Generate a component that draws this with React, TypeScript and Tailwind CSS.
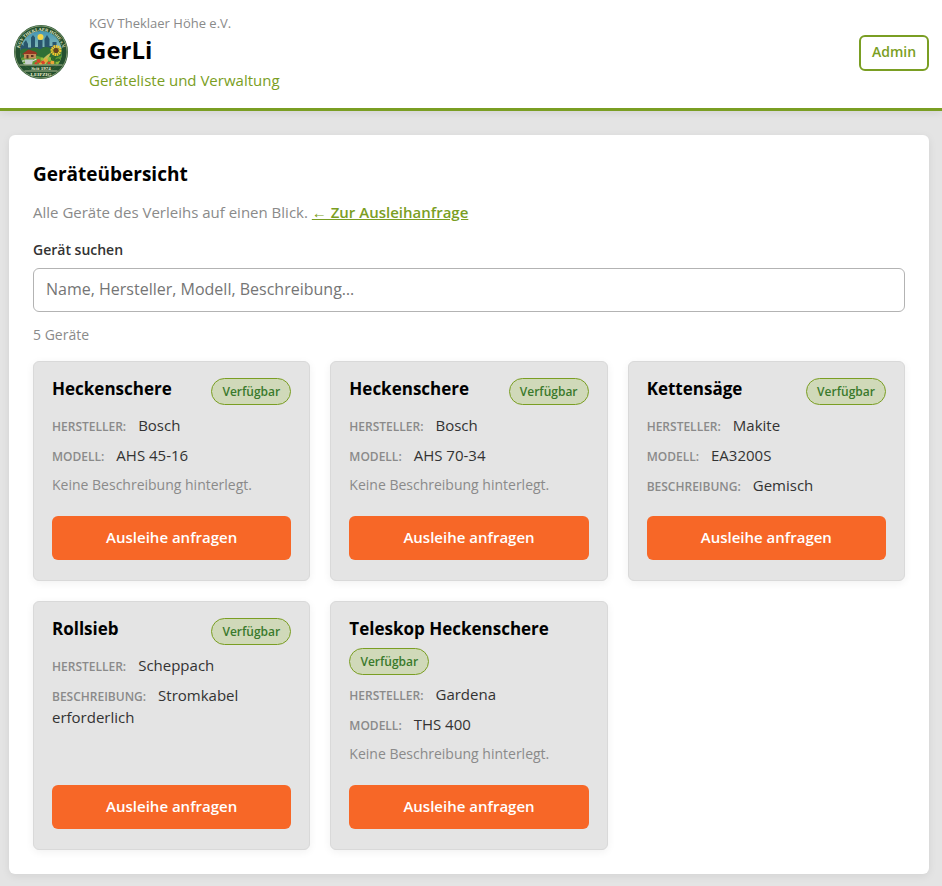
import { useState } from "react";

type Device = {
  id: number;
  name: string;
  manufacturer: string;
  model?: string;
  description?: string;
};

const devices: Device[] = [
  { id: 1, name: "Heckenschere", manufacturer: "Bosch", model: "AHS 45-16" },
  { id: 2, name: "Heckenschere", manufacturer: "Bosch", model: "AHS 70-34" },
  { id: 3, name: "Kettensäge", manufacturer: "Makite", model: "EA3200S", description: "Gemisch" },
  { id: 4, name: "Rollsieb", manufacturer: "Scheppach", description: "Stromkabel erforderlich" },
  { id: 5, name: "Teleskop Heckenschere", manufacturer: "Gardena", model: "THS 400" },
];

function Logo() {
  return (
    <svg viewBox="0 0 112 112" className="size-14 shrink-0" role="img" aria-label="Vereinslogo">
      <defs>
        <clipPath id="scene">
          <circle cx="56" cy="54" r="42" />
        </clipPath>
        <linearGradient id="sky" x1="0" y1="0" x2="0" y2="1">
          <stop offset="0" stopColor="#3f93b5" />
          <stop offset="1" stopColor="#c9dfb4" />
        </linearGradient>
        <path id="topArc" d="M12 56 A44 44 0 0 1 100 56" />
      </defs>
      <circle cx="56" cy="54" r="54" fill="#24502f" />
      <circle cx="56" cy="54" r="52" fill="none" stroke="#9fb184" strokeWidth="1.5" />
      <g clipPath="url(#scene)">
        <rect width="112" height="70" y="10" fill="url(#sky)" />
        <circle cx="55" cy="24" r="6" fill="#f5d547" />
        <path d="M10 56V42l6-5 5 5v-6l5-6 4 8v7h6V25l4-5 4 5v19h6V30h9v14h4V28l5-8 5 8v14h6V34h8v22z" fill="#29566d" />
        <path d="M10 54q10-11 22-5 11-8 22 0 12-9 24-1 12-7 24 3v60H10z" fill="#2f7035" />
        <path d="M10 69q24-14 46-5t46-5v30H10z" fill="#5f9b34" />
        <path d="M54 78Q60 64 76 55L66 78z" fill="#c3bd58" />
        <path d="M20 57l11-8 15 5 3 5H18z" fill="#963722" />
        <path d="M22 58h24v9H22z" fill="#c58c58" />
        <path d="M27 60h4v7h-4zM36 60h5v4h-5z" fill="#593522" />
        <path d="M23 69h17l-2 11H25z" fill="#c6cfcc" />
        <path d="M39 72l8-4M23 72q-7-1-4 5l6 1" stroke="#d4dcda" strokeWidth="2.5" fill="none" />
        <g fill="#d8432a">
          <circle cx="51" cy="72" r="4" />
          <circle cx="60" cy="75" r="4" />
          <circle cx="46" cy="77" r="3" />
          <circle cx="72" cy="76" r="3" />
        </g>
        <g fill="#eba33a">
          <circle cx="66" cy="71" r="4" />
          <circle cx="79" cy="75" r="4" />
          <circle cx="55" cy="78" r="3" />
        </g>
        <g fill="#91bd3c">
          <circle cx="58" cy="68" r="3" />
          <circle cx="73" cy="68" r="4" />
          <circle cx="89" cy="73" r="5" />
        </g>
        <path d="M84 57v20M84 68q-6-5-8 0 3 4 8 2M84 71q7-6 10-1-4 4-10 2" stroke="#28612c" strokeWidth="2" fill="#357a30" />
        <circle cx="86" cy="51" r="8" fill="none" stroke="#f5c72e" strokeWidth="6" strokeDasharray="3 1" />
        <circle cx="86" cy="51" r="5" fill="#68401d" />
        <rect x="10" y="79" width="92" height="25" fill="#24502f" />
      </g>
      <path d="M13 80h86M23 92h66" stroke="#d7d8ad" strokeWidth="1.5" />
      <text fill="#f0efd0" className="font-['Liberation_Serif',serif] text-[9px] font-bold">
        <textPath href="#topArc" startOffset="50%" textAnchor="middle">KGV THEKLAER HÖHE e.V.</textPath>
      </text>
      <text x="56" y="90" textAnchor="middle" fill="#f0efd0" className="font-['Liberation_Serif',serif] text-[10px] font-bold">Seit 1974</text>
      <text x="56" y="102" textAnchor="middle" fill="#f0efd0" className="font-['Liberation_Serif',serif] text-[10px] font-bold">LEIPZIG</text>
    </svg>
  );
}

function Field({ label, value }: { label: string; value: string }) {
  return (
    <p className="text-[15px] leading-[22px] text-[#333]">
      <span className="mr-3 text-[12px] leading-none font-semibold uppercase text-[#8a8a8a]">{label}:</span>
      {value}
    </p>
  );
}

function DeviceCard({ device }: { device: Device }) {
  return (
    <li className="flex flex-col rounded-md border border-[#d9d9d9] bg-[#e4e4e4] px-[18px] pt-4 pb-5 shadow-[0_2px_8px_rgba(0,0,0,0.06)]">
      <div className="mb-2 flex min-h-7 flex-wrap items-start justify-between gap-2">
        <h3 className="text-[17px] font-bold leading-[22px] text-black">{device.name}</h3>
        <span className="flex h-[27px] w-20 items-center justify-center rounded-full border border-[#7a9e23] bg-[#d0d9b9] text-[12px] font-semibold text-[#3a7a2c]">
          Verfügbar
        </span>
      </div>
      <div className="mb-5 flex flex-col gap-2">
        <Field label="Hersteller" value={device.manufacturer} />
        {device.model && <Field label="Modell" value={device.model} />}
        {device.description ? (
          <Field label="Beschreibung" value={device.description} />
        ) : (
          <p className="text-sm leading-[22px] text-[#8a8a8a]">Keine Beschreibung hinterlegt.</p>
        )}
      </div>
      <button type="button" className="mt-auto h-11 w-full rounded-md bg-[#f76727] pb-0.5 text-[15px] font-semibold text-white">
        Ausleihe anfragen
      </button>
    </li>
  );
}

export default function App() {
  const [query, setQuery] = useState("");
  const needle = query.trim().toLowerCase();
  const visible = devices.filter((d) =>
    [d.name, d.manufacturer, d.model, d.description].join(" ").toLowerCase().includes(needle),
  );

  return (
    <div className="min-h-screen bg-[#e4e4e4] font-['Open_Sans','Noto_Sans',sans-serif] text-[#333]">
      <header className="border-b-[3px] border-[#7a9e23] bg-white px-[13px] pt-3 pb-[14px] shadow-[0_2px_8px_rgba(0,0,0,0.08)]">
        <div className="flex items-center gap-5">
          <Logo />
          <div className="grow">
            <p className="text-[13px] leading-[22px] text-[#8a8a8a]">KGV Theklaer Höhe e.V.</p>
            <h1 className="text-2xl font-bold leading-8 text-black">GerLi</h1>
            <p className="text-[15px] leading-7 text-[#7a9e23]">Geräteliste und Verwaltung</p>
          </div>
          <a href="#admin" className="flex h-9 w-[70px] items-center justify-center rounded-md border-2 border-[#7a9e23] pb-0.5 text-sm font-semibold text-[#7a9e23]">
            Admin
          </a>
        </div>
      </header>

      <main className="pt-6 pr-[13px] pb-3 pl-[9px]">
        <section className="rounded-md bg-white p-6 shadow-[0_2px_8px_rgba(0,0,0,0.08)]">
          <h2 className="mb-3 text-[19px] font-bold leading-[30px] text-black">Geräteübersicht</h2>
          <p className="mb-4 text-[15px] leading-[22px] text-[#8a8a8a]">
            Alle Geräte des Verleihs auf einen Blick.{" "}
            <a href="#ausleihe" className="font-semibold text-[#7a9e23] underline">← Zur Ausleihanfrage</a>
          </p>
          <label htmlFor="search" className="mb-[7px] block text-sm font-semibold leading-[22px]">Gerät suchen</label>
          <input
            id="search"
            type="search"
            value={query}
            onChange={(e) => setQuery(e.target.value)}
            placeholder="Name, Hersteller, Modell, Beschreibung…"
            className="mb-3 block h-11 w-full rounded-md border border-[#b3b3b3] bg-white px-3 pb-0.5 text-base placeholder:text-[#757575]"
          />
          <p className="mb-4 text-sm leading-[21px] text-[#8a8a8a]">{visible.length} Geräte</p>
          <ul className="grid grid-cols-1 gap-5 sm:grid-cols-2 md:grid-cols-3">
            {visible.map((d) => (
              <DeviceCard key={d.id} device={d} />
            ))}
          </ul>
        </section>
      </main>
    </div>
  );
}
